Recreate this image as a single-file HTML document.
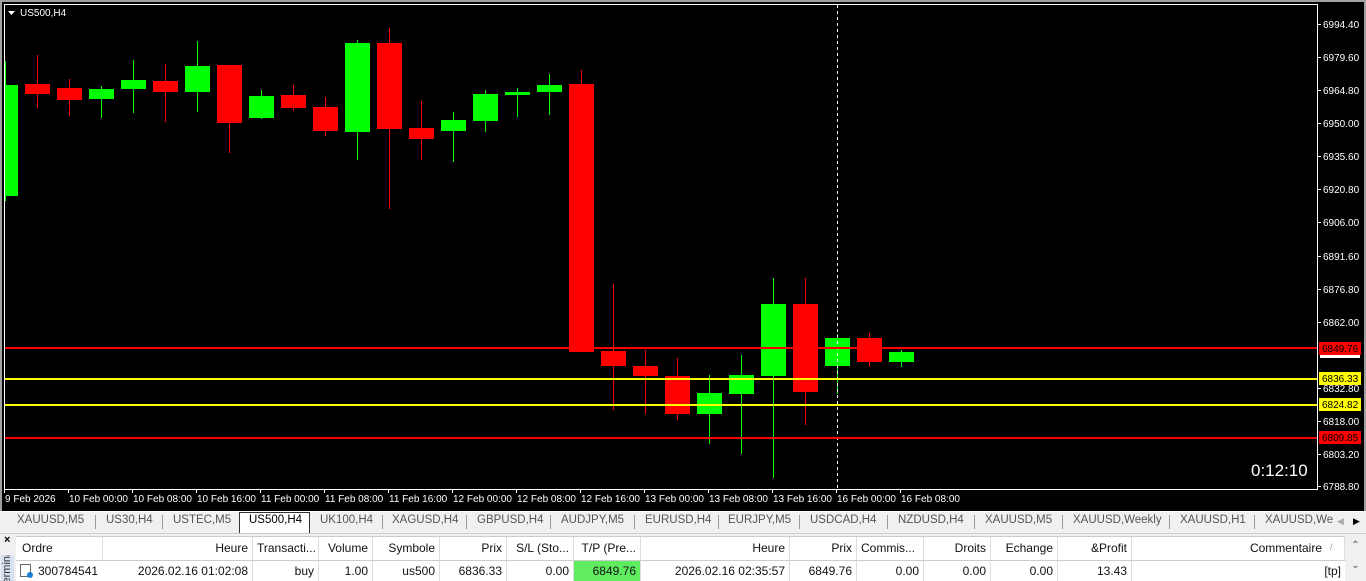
<!DOCTYPE html>
<html><head><meta charset="utf-8"><style>
*{margin:0;padding:0;box-sizing:border-box}
body{width:1366px;height:581px;overflow:hidden;background:#f0f0f0;font-family:"Liberation Sans",sans-serif;position:relative}
.abs{position:absolute}
.tab{position:absolute;top:514px;font-size:11.5px;color:#555;white-space:nowrap}
.sep{position:absolute;top:515px;width:1px;height:14px;background:#999}
.cell{position:absolute;font-size:12px;color:#111;white-space:nowrap;height:100%;border-right:1px solid #ddd;padding:0 4px;line-height:23px}
.r{text-align:right}
</style></head><body>
<div class="abs" style="left:0;top:0;width:1366px;height:511px;background:#000;border:2px solid #a0a0a0;border-bottom:none"></div>
<svg class="abs" style="left:0;top:0" width="1366" height="511" xmlns="http://www.w3.org/2000/svg" font-family="Liberation Sans, sans-serif">
<rect x="4.5" y="4.5" width="1313" height="485" fill="none" stroke="#fff" stroke-width="1"/>
<g fill="#0f0">
<rect x="5" y="85" width="13" height="111"/><rect x="5" y="61" width="1" height="140"/>
</g>
<g>
<rect x="37" y="55" width="1" height="53" fill="#f00"/><rect x="25" y="84" width="25" height="10" fill="#f00"/>
<rect x="69" y="79" width="1" height="37" fill="#f00"/><rect x="57" y="88" width="25" height="12" fill="#f00"/>
<rect x="101" y="86" width="1" height="32" fill="#0f0"/><rect x="89" y="89" width="25" height="10" fill="#0f0"/>
<rect x="133" y="60" width="1" height="53" fill="#0f0"/><rect x="121" y="80" width="25" height="9" fill="#0f0"/>
<rect x="165" y="64" width="1" height="58" fill="#f00"/><rect x="153" y="81" width="25" height="11" fill="#f00"/>
<rect x="197" y="41" width="1" height="71" fill="#0f0"/><rect x="185" y="66" width="25" height="26" fill="#0f0"/>
<rect x="229" y="65" width="1" height="88" fill="#f00"/><rect x="217" y="65" width="25" height="58" fill="#f00"/>
<rect x="261" y="90" width="1" height="29" fill="#0f0"/><rect x="249" y="96" width="25" height="22" fill="#0f0"/>
<rect x="293" y="85" width="1" height="26" fill="#f00"/><rect x="281" y="95" width="25" height="13" fill="#f00"/>
<rect x="325" y="97" width="1" height="39" fill="#f00"/><rect x="313" y="107" width="25" height="24" fill="#f00"/>
<rect x="357" y="40" width="1" height="120" fill="#0f0"/><rect x="345" y="43" width="25" height="89" fill="#0f0"/>
<rect x="389" y="28" width="1" height="181" fill="#f00"/><rect x="377" y="43" width="25" height="86" fill="#f00"/>
<rect x="421" y="101" width="1" height="59" fill="#f00"/><rect x="409" y="128" width="25" height="11" fill="#f00"/>
<rect x="453" y="112" width="1" height="50" fill="#0f0"/><rect x="441" y="120" width="25" height="11" fill="#0f0"/>
<rect x="485" y="90" width="1" height="42" fill="#0f0"/><rect x="473" y="94" width="25" height="27" fill="#0f0"/>
<rect x="517" y="88" width="1" height="29" fill="#0f0"/><rect x="505" y="92" width="25" height="3" fill="#0f0"/>
<rect x="549" y="74" width="1" height="41" fill="#0f0"/><rect x="537" y="85" width="25" height="7" fill="#0f0"/>
<rect x="581" y="70" width="1" height="20" fill="#f00"/><rect x="569" y="84" width="25" height="268" fill="#f00"/>
<rect x="613" y="284" width="1" height="126" fill="#f00"/><rect x="601" y="351" width="25" height="15" fill="#f00"/>
<rect x="645" y="350" width="1" height="64" fill="#f00"/><rect x="633" y="366" width="25" height="10" fill="#f00"/>
<rect x="677" y="358" width="1" height="62" fill="#f00"/><rect x="665" y="376" width="25" height="38" fill="#f00"/>
<rect x="709" y="375" width="1" height="69" fill="#0f0"/><rect x="697" y="393" width="25" height="21" fill="#0f0"/>
<rect x="741" y="355" width="1" height="99" fill="#0f0"/><rect x="729" y="375" width="25" height="19" fill="#0f0"/>
<rect x="773" y="278" width="1" height="200" fill="#0f0"/><rect x="761" y="304" width="25" height="72" fill="#0f0"/>
<rect x="805" y="278" width="1" height="147" fill="#f00"/><rect x="793" y="304" width="25" height="88" fill="#f00"/>
<rect x="837" y="334" width="1" height="60" fill="#0f0"/><rect x="825" y="338" width="25" height="28" fill="#0f0"/>
<rect x="869" y="333" width="1" height="34" fill="#f00"/><rect x="857" y="338" width="25" height="24" fill="#f00"/>
<rect x="901" y="350" width="1" height="17" fill="#0f0"/><rect x="889" y="352" width="25" height="10" fill="#0f0"/>
</g>
<line x1="837.5" y1="5" x2="837.5" y2="489" stroke="#fff" stroke-dasharray="3,3"/>
<rect x="5" y="347" width="1312" height="2" fill="#f00"/>
<rect x="5" y="378" width="1312" height="2" fill="#ff0"/>
<rect x="5" y="404" width="1312" height="2" fill="#ff0"/>
<rect x="5" y="437" width="1312" height="2" fill="#f00"/>
<path d="M8 11h7l-3.5 4z" fill="#fff"/>
<text x="20" y="16" font-size="10" fill="#fff">US500,H4</text>
<g fill="#fff" font-size="10">
<text x="1323" y="28">6994.40</text><text x="1323" y="61">6979.60</text><text x="1323" y="94">6964.80</text><text x="1323" y="127">6950.00</text><text x="1323" y="160">6935.60</text><text x="1323" y="193">6920.80</text><text x="1323" y="226">6906.00</text><text x="1323" y="260">6891.60</text><text x="1323" y="293">6876.80</text><text x="1323" y="326">6862.00</text><text x="1323" y="392">6832.80</text><text x="1323" y="425">6818.00</text><text x="1323" y="458">6803.20</text><text x="1323" y="490">6788.80</text>
</g>
<g fill="#fff">
<rect x="1318" y="24" width="3" height="1"/><rect x="1318" y="57" width="3" height="1"/><rect x="1318" y="90" width="3" height="1"/><rect x="1318" y="123" width="3" height="1"/><rect x="1318" y="156" width="3" height="1"/><rect x="1318" y="189" width="3" height="1"/><rect x="1318" y="222" width="3" height="1"/><rect x="1318" y="256" width="3" height="1"/><rect x="1318" y="289" width="3" height="1"/><rect x="1318" y="322" width="3" height="1"/><rect x="1318" y="388" width="3" height="1"/><rect x="1318" y="421" width="3" height="1"/><rect x="1318" y="454" width="3" height="1"/><rect x="1318" y="486" width="3" height="1"/>
<rect x="1320" y="354" width="40" height="4"/>
</g>
<rect x="1319" y="342" width="42" height="13" fill="#f00"/><text x="1322" y="352" font-size="10" fill="#000">6849.76</text>
<rect x="1319" y="372" width="42" height="13" fill="#ff0"/><text x="1322" y="382" font-size="10" fill="#000">6836.33</text>
<rect x="1319" y="398" width="42" height="13" fill="#ff0"/><text x="1322" y="408" font-size="10" fill="#000">6824.82</text>
<rect x="1319" y="431" width="42" height="13" fill="#f00"/><text x="1322" y="441" font-size="10" fill="#000">6809.85</text>
<text x="1251" y="476" font-size="17" fill="#fff">0:12:10</text>
<g fill="#fff">
<rect x="4" y="489" width="1" height="4"/><rect x="68" y="489" width="1" height="4"/><rect x="132" y="489" width="1" height="4"/><rect x="196" y="489" width="1" height="4"/><rect x="260" y="489" width="1" height="4"/><rect x="324" y="489" width="1" height="4"/><rect x="388" y="489" width="1" height="4"/><rect x="452" y="489" width="1" height="4"/><rect x="516" y="489" width="1" height="4"/><rect x="580" y="489" width="1" height="4"/><rect x="644" y="489" width="1" height="4"/><rect x="708" y="489" width="1" height="4"/><rect x="772" y="489" width="1" height="4"/><rect x="836" y="489" width="1" height="4"/><rect x="900" y="489" width="1" height="4"/>
</g>
<g fill="#fff" font-size="10">
<text x="5" y="502">9 Feb 2026</text><text x="69" y="502">10 Feb 00:00</text><text x="133" y="502">10 Feb 08:00</text><text x="197" y="502">10 Feb 16:00</text><text x="261" y="502">11 Feb 00:00</text><text x="325" y="502">11 Feb 08:00</text><text x="389" y="502">11 Feb 16:00</text><text x="453" y="502">12 Feb 00:00</text><text x="517" y="502">12 Feb 08:00</text><text x="581" y="502">12 Feb 16:00</text><text x="645" y="502">13 Feb 00:00</text><text x="709" y="502">13 Feb 08:00</text><text x="773" y="502">13 Feb 16:00</text><text x="837" y="502">16 Feb 00:00</text><text x="901" y="502">16 Feb 08:00</text>
</g>
</svg>
<div class="abs" style="left:0;top:511px;width:1366px;height:1px;background:#fff"></div>
<div class="abs" style="left:239px;top:512px;width:71px;height:21px;background:#fff;border:1px solid #333;border-bottom:none"></div>
<div class="tab" style="left:17px">XAUUSD,M5</div><div class="sep" style="left:95px"></div>
<div class="tab" style="left:106px">US30,H4</div><div class="sep" style="left:162px"></div>
<div class="tab" style="left:173px">USTEC,M5</div>
<div class="tab" style="left:249px;color:#000">US500,H4</div>
<div class="tab" style="left:320px">UK100,H4</div><div class="sep" style="left:382px"></div>
<div class="tab" style="left:392px">XAGUSD,H4</div><div class="sep" style="left:466px"></div>
<div class="tab" style="left:477px">GBPUSD,H4</div><div class="sep" style="left:550px"></div>
<div class="tab" style="left:561px">AUDJPY,M5</div><div class="sep" style="left:634px"></div>
<div class="tab" style="left:645px">EURUSD,H4</div><div class="sep" style="left:718px"></div>
<div class="tab" style="left:728px">EURJPY,M5</div><div class="sep" style="left:799px"></div>
<div class="tab" style="left:810px">USDCAD,H4</div><div class="sep" style="left:887px"></div>
<div class="tab" style="left:898px">NZDUSD,H4</div><div class="sep" style="left:974px"></div>
<div class="tab" style="left:985px">XAUUSD,M5</div><div class="sep" style="left:1062px"></div>
<div class="tab" style="left:1073px">XAUUSD,Weekly</div><div class="sep" style="left:1169px"></div>
<div class="tab" style="left:1180px">XAUUSD,H1</div><div class="sep" style="left:1254px"></div>
<div class="tab" style="left:1265px;width:68px;overflow:hidden">XAUUSD,Weekly</div>
<div class="tab" style="left:1337px;color:#aaa;font-size:9px;top:516px">◀</div>
<div class="tab" style="left:1353px;color:#000;font-size:9px;top:516px">▶</div>
<div class="abs" style="left:0;top:533px;width:1366px;height:1px;background:#ccc"></div>
<div class="abs" style="left:4px;top:534px;font-size:11px;font-weight:bold">×</div>
<div class="abs" style="left:1px;top:555px;width:13px;height:26px;background:#d6e2f0;overflow:hidden"><div style="transform:rotate(-90deg);transform-origin:0 0;position:absolute;left:0;top:34px;font-size:11px;color:#333">Terminal</div></div>
<div class="abs" style="left:16px;top:536px;width:1329px;height:25px;background:#fff;border-top:1px solid #ccc;border-bottom:1px solid #ccc">
<div class="cell" style="left:0;width:87px;padding-left:6px">Ordre</div>
<div class="cell r" style="left:87px;width:150px">Heure</div>
<div class="cell" style="left:237px;width:66px">Transacti...</div>
<div class="cell r" style="left:303px;width:54px">Volume</div>
<div class="cell r" style="left:357px;width:67px">Symbole</div>
<div class="cell r" style="left:424px;width:67px">Prix</div>
<div class="cell r" style="left:491px;width:67px">S/L (Sto...</div>
<div class="cell r" style="left:558px;width:67px">T/P (Pre...</div>
<div class="cell r" style="left:625px;width:149px">Heure</div>
<div class="cell r" style="left:774px;width:67px">Prix</div>
<div class="cell" style="left:841px;width:67px">Commis...</div>
<div class="cell r" style="left:908px;width:67px">Droits</div>
<div class="cell r" style="left:975px;width:67px">Echange</div>
<div class="cell r" style="left:1042px;width:74px">&amp;Profit</div>
<div class="cell r" style="left:1116px;width:213px;padding-right:22px">Commentaire</div>
<div class="abs" style="left:1314px;top:5px;font-size:9px;color:#999">/</div>
</div>
<div class="abs" style="left:16px;top:561px;width:1329px;height:20px;background:#fff">
<div class="cell" style="left:0;width:87px;padding-left:22px;line-height:20px;border:none">300784541</div>
<div class="abs" style="left:4px;top:3px;width:11px;height:13px;border:1px solid #666;background:#fff"></div><div class="abs" style="left:11px;top:11px;width:6px;height:6px;border-radius:3px;background:#1a7fd4"></div>
<div class="cell r" style="left:87px;width:150px;line-height:20px">2026.02.16 01:02:08</div>
<div class="cell r" style="left:237px;width:66px;line-height:20px">buy</div>
<div class="cell r" style="left:303px;width:54px;line-height:20px">1.00</div>
<div class="cell r" style="left:357px;width:67px;line-height:20px">us500</div>
<div class="cell r" style="left:424px;width:67px;line-height:20px">6836.33</div>
<div class="cell r" style="left:491px;width:67px;line-height:20px">0.00</div>
<div class="cell r" style="left:558px;width:67px;line-height:20px;background:#5fec5f">6849.76</div>
<div class="cell r" style="left:625px;width:149px;line-height:20px">2026.02.16 02:35:57</div>
<div class="cell r" style="left:774px;width:67px;line-height:20px">6849.76</div>
<div class="cell r" style="left:841px;width:67px;line-height:20px">0.00</div>
<div class="cell r" style="left:908px;width:67px;line-height:20px">0.00</div>
<div class="cell r" style="left:975px;width:67px;line-height:20px">0.00</div>
<div class="cell r" style="left:1042px;width:74px;line-height:20px">13.43</div>
<div class="cell r" style="left:1116px;width:213px;line-height:20px;border:none">[tp]</div>
</div>
<div class="abs" style="left:1345px;top:536px;width:21px;height:45px;background:#f0f0f0;font-size:10px;color:#555;text-align:center;line-height:20px">⌃<br>⌄</div>
</body></html>
